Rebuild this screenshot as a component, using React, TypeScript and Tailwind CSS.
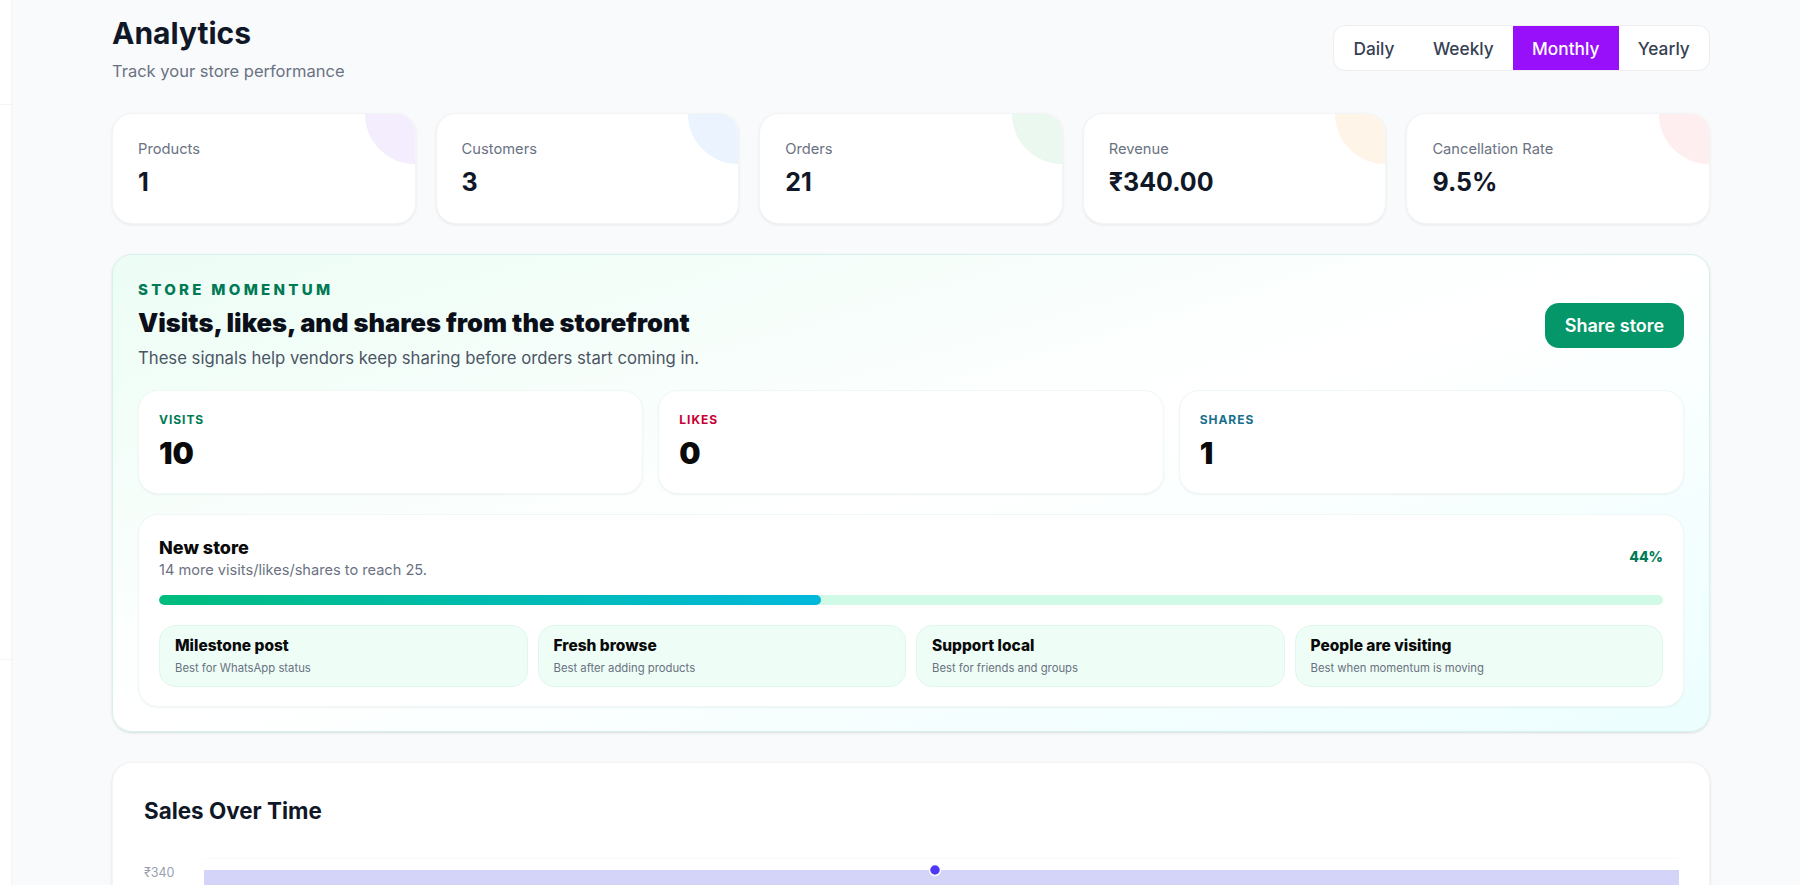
const STATS = [
  { label: "Products", value: "1", blob: "bg-[#f3edfd]" },
  { label: "Customers", value: "3", blob: "bg-[#eaf3fe]" },
  { label: "Orders", value: "21", blob: "bg-[#eaf8ef]" },
  { label: "Revenue", value: "₹340.00", blob: "bg-[#fff4e8]" },
  { label: "Cancellation Rate", value: "9.5%", blob: "bg-[#ffeef0]" },
];

const SIGNALS = [
  { label: "VISITS", value: "10", color: "text-[#007a55]" },
  { label: "LIKES", value: "0", color: "text-[#c70036]" },
  { label: "SHARES", value: "1", color: "text-[#1a6f8e]" },
];

const POSTS = [
  { title: "Milestone post", hint: "Best for WhatsApp status" },
  { title: "Fresh browse", hint: "Best after adding products" },
  { title: "Support local", hint: "Best for friends and groups" },
  { title: "People are visiting", hint: "Best when momentum is moving" },
];

const PERIODS = ["Daily", "Weekly", "Monthly", "Yearly"];

export default function App() {
  return (
    <div className="flex h-[885px] overflow-hidden bg-[#f9fafb] font-['Inter',sans-serif]">
      {/* collapsed sidebar edge */}
      <aside className="w-[12px] shrink-0 bg-white border-r border-gray-100">
        <div className="h-[105px] border-b border-gray-100" />
        <div className="h-[555px] border-b border-gray-100" />
      </aside>

      <main className="pl-[100px]">
        <div className="w-[1598px] pt-[15px]">
          {/* Header */}
          <div className="flex items-start justify-between h-[98px]">
            <div>
              <h1 className="text-[30px] leading-9 font-bold text-[#101828]">Analytics</h1>
              <p className="mt-[8px] text-[16.5px] leading-6 text-[#6a7282]">Track your store performance</p>
            </div>
            <div className="mt-[10px] flex h-[46px] overflow-hidden rounded-[12px] border border-gray-200/70 bg-white">
              {PERIODS.map((p) => (
                <button
                  key={p}
                  className={`px-[19.2px] pt-[2px] text-[17.3px] font-medium ${p === "Monthly" ? "bg-[#9810fa] text-white" : "text-[#364153]"}`}
                >
                  {p}
                </button>
              ))}
            </div>
          </div>

          {/* Stat cards */}
          <div className="grid grid-cols-5 gap-5">
            {STATS.map((s) => (
              <div key={s.label} className="relative h-[111px] overflow-hidden rounded-[20px] border border-gray-100 bg-white px-[25px] pt-[25px] shadow-[0_1px_3px_rgba(0,0,0,0.07)]">
                <div className={`absolute -top-[50px] -right-[50px] h-[100px] w-[100px] rounded-full ${s.blob}`} />
                <p className="text-[14.7px] leading-[20px] text-[#6a7282]">{s.label}</p>
                <p className="mt-[7px] text-[25px] leading-8 font-bold text-[#101828]">{s.value}</p>
              </div>
            ))}
          </div>

          {/* Store momentum */}
          <section className="mt-[30px] h-[478px] rounded-[20px] border border-[#d5f3ea] bg-gradient-to-br from-[#ecfdf5] via-white to-[#ecfeff] p-[25px] shadow-sm">
            <div className="flex items-center justify-between">
              <div>
                <p className="text-[15px] leading-[20px] font-extrabold tracking-[0.22em] text-[#007a55]">STORE MOMENTUM</p>
                <h2 className="mt-[6px] text-[25.5px] leading-[34px] font-black text-[#0b0f19]">Visits, likes, and shares from the storefront</h2>
                <p className="mt-[6px] text-[16.7px] leading-6 text-[#4a5565]">These signals help vendors keep sharing before orders start coming in.</p>
              </div>
              <button className="h-[45px] w-[139px] rounded-[14px] bg-[#059669] text-[18px] font-semibold text-white">Share store</button>
            </div>

            <div className="mt-[20px] grid grid-cols-3 gap-[15px]">
              {SIGNALS.map((s) => (
                <div key={s.label} className="h-[104px] rounded-[20px] border border-[#eef8f5] bg-white px-[20px] pt-[21px] shadow-[0_1px_2px_rgba(0,0,0,0.05)]">
                  <p className={`text-[12px] leading-[16px] font-bold tracking-[0.08em] ${s.color}`}>{s.label}</p>
                  <p className="mt-[7px] text-[30px] leading-9 font-black text-[#0a0a0a]">{s.value}</p>
                </div>
              ))}
            </div>

            <div className="mt-[20px] h-[193px] rounded-[20px] border border-[#eef8f5] bg-white px-[20px] pt-[21px] shadow-[0_1px_2px_rgba(0,0,0,0.05)]">
              <div className="flex items-start justify-between">
                <div>
                  <p className="text-[18px] leading-[24px] font-extrabold text-[#0a0a0a]">New store</p>
                  <p className="text-[14.6px] leading-[20px] text-[#6a7282]">14 more visits/likes/shares to reach 25.</p>
                </div>
                <p className="mt-[11px] text-[14px] leading-[20px] font-extrabold text-[#007a55]">44%</p>
              </div>
              <div className="mt-[15px] h-[10px] overflow-hidden rounded-full bg-[#d0fae5]">
                <div className="h-full rounded-full bg-gradient-to-r from-[#00bc7d] to-[#00b8db]" style={{ width: "44%" }} />
              </div>
              <div className="mt-[20px] grid grid-cols-4 gap-[10px]">
                {POSTS.map((p) => (
                  <div key={p.title} className="h-[62px] rounded-[16px] border border-[#dff8ee] bg-[#eefdf6] px-[15px] pt-[10px]">
                    <p className="text-[15.5px] leading-[20px] font-extrabold text-[#0a0a0a]">{p.title}</p>
                    <p className="mt-[4px] text-[11.3px] leading-[16px] text-[#6a7282]">{p.hint}</p>
                  </div>
                ))}
              </div>
            </div>
          </section>

          {/* Sales over time */}
          <section className="mt-[30px] h-[400px] rounded-[20px] border border-gray-100 bg-white pl-[31px] pr-[30px] pt-[34px] shadow-sm">
            <h3 className="text-[22.4px] leading-[28px] font-bold text-[#101828]">Sales Over Time</h3>
            <div className="mt-[33px] flex gap-[30px]">
              <span className="mt-[7px] w-[30px] text-[12.5px] leading-[16px] text-[#99a1af]">₹340</span>
              <div className="relative h-[300px] flex-1 border-t border-gray-50">
                <div className="absolute inset-x-0 top-[11px] bottom-0 bg-[#d4d4f8]" />
                <svg className="absolute left-[723.5px] top-[4px]" width="14" height="14" viewBox="0 0 14 14">
                  <circle cx="7" cy="7" r="5.5" fill="#4f39f6" stroke="#fff" strokeWidth="1.5" />
                </svg>
              </div>
            </div>
          </section>
        </div>
      </main>
    </div>
  );
}
